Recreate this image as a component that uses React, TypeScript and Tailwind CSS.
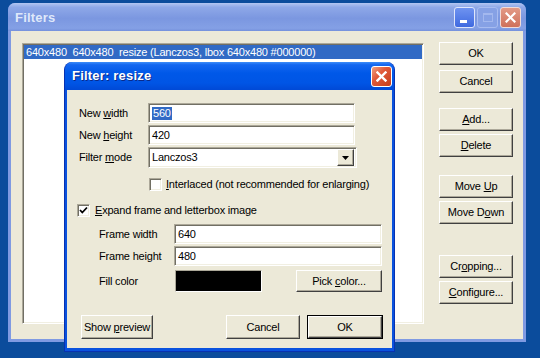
import React from "react";

function U({ children }: { children: React.ReactNode }) {
  return <span className="underline underline-offset-[1px] decoration-[1px]">{children}</span>;
}

const raised =
  "bg-[#ece9d8] border border-t-white border-l-white border-r-[#404040] border-b-[#404040] shadow-[inset_-1px_-1px_0_#aca899]";
const sunken =
  "bg-white border border-t-[#aca899] border-l-[#aca899] border-r-white border-b-white shadow-[inset_1px_1px_0_#716f64,inset_-1px_-1px_0_#f1efe2]";

function Btn({ children, className = "" }: { children: React.ReactNode; className?: string }) {
  return (
    <div className={`${raised} flex items-center justify-center text-[11px] text-black leading-none ${className}`}>
      <span className="whitespace-pre">{children}</span>
    </div>
  );
}

function XIcon({ size = 11, width = 2.2 }: { size?: number; width?: number }) {
  return (
    <svg width={size} height={size} viewBox="0 0 11 11">
      <line x1="1.5" y1="1.5" x2="9.5" y2="9.5" stroke="white" strokeWidth={width} strokeLinecap="square" />
      <line x1="9.5" y1="1.5" x2="1.5" y2="9.5" stroke="white" strokeWidth={width} strokeLinecap="square" />
    </svg>
  );
}

function Check({ checked }: { checked?: boolean }) {
  return (
    <div className={`${sunken} w-[13px] h-[13px] flex items-center justify-center shrink-0`}>
      {checked && (
        <svg width="9" height="9" viewBox="0 0 9 9">
          <polyline points="1,4 3.3,6.5 8,1.5" fill="none" stroke="black" strokeWidth="1.8" />
        </svg>
      )}
    </div>
  );
}

function Field({ children, className = "" }: { children: React.ReactNode; className?: string }) {
  return (
    <div className={`${sunken} h-[20px] flex items-center pl-[3px] text-[11px] text-black ${className}`}>{children}</div>
  );
}

export default function App() {
  return (
    <div className="w-[540px] h-[358px] bg-[#0b4c9c] relative overflow-hidden pl-[8px] pt-[3px] font-['Liberation_Sans',Arial,sans-serif] text-[11px] text-black tracking-[-0.2px]">
      {/* Outer window: Filters (inactive) */}
      <div className="w-[518px] h-[339px] rounded-t-[7px] bg-[#7f9ae2] flex flex-col">
        <div className="h-[28px] rounded-t-[7px] bg-[linear-gradient(to_bottom,#b3c6f2_0%,#8ea8e8_15%,#7b97e0_55%,#84a0e5_90%,#7591dc_100%)] flex items-center pl-[7px] pr-[5px] pt-[2px]">
          <span className="text-[13px] font-bold text-[#dfe8fa] tracking-[0.2px]">Filters</span>
          <div className="ml-auto flex gap-[2px] -mt-[2px]">
            <div className="w-[21px] h-[21px] rounded-[3px] border border-[#dfe6fb] bg-[linear-gradient(to_bottom,#6f93f0,#3f6ae0)] relative">
              <div className="absolute left-[5px] top-[12px] w-[7px] h-[3px] bg-white" />
            </div>
            <div className="w-[21px] h-[21px] rounded-[3px] border border-[#a8bcf0] bg-[#86a1e5] flex items-center justify-center">
              <div className="w-[10px] h-[9px] border border-[#a3b8ee] border-t-2" />
            </div>
            <div className="w-[21px] h-[21px] rounded-[3px] border border-[#f1dcd8] bg-[linear-gradient(to_bottom,#e39a86,#cf715b)] flex items-center justify-center">
              <XIcon size={11} width={2.2} />
            </div>
          </div>
        </div>
        <div className="flex-1 mx-[3px] mb-[3px] bg-[#ece9d8] flex pl-[11px] pt-[12px]">
          <div className="w-[402px] h-[281px] bg-white border border-t-[#aca899] border-l-[#aca899] border-r-white border-b-white shadow-[inset_1px_1px_0_#716f64,inset_-1px_-1px_0_#f1efe2] p-[1px]">
            <div className="h-[14px] bg-[#316ac5] text-white whitespace-pre flex items-center pl-[2px] leading-none">
              {"640x480  640x480  resize (Lanczos3, lbox 640x480 #000000)"}
            </div>
          </div>
          <div className="ml-[15px] w-[74px] flex flex-col">
            <Btn className="mt-[-1px] h-[23px]">OK</Btn>
            <Btn className="mt-[5px] h-[23px]">Cancel</Btn>
            <Btn className="mt-[15px] h-[23px]">
              <U>A</U>dd...
            </Btn>
            <Btn className="mt-[3px] h-[23px]">
              <U>D</U>elete
            </Btn>
            <Btn className="mt-[18px] h-[23px]">
              Move <U>U</U>p
            </Btn>
            <Btn className="mt-[3px] h-[23px]">
              Move D<U>o</U>wn
            </Btn>
            <Btn className="mt-[31px] h-[23px]">
              Cr<U>o</U>pping...
            </Btn>
            <Btn className="mt-[3px] h-[23px]">
              <U>C</U>onfigure...
            </Btn>
          </div>
        </div>
      </div>

      {/* Inner dialog: Filter: resize (active) */}
      <div className="absolute left-[64px] top-[62px] w-[331px] h-[290px] rounded-t-[8px] bg-[#0a52de] border border-[#0831b0] border-t-0 flex flex-col">
        <div className="h-[28px] rounded-t-[8px] bg-[linear-gradient(to_bottom,#3d8df8_0%,#1366f0_10%,#0058e8_40%,#0055e5_75%,#0049d6_100%)] flex items-center pl-[7px] pr-[2px]">
          <span className="text-[13px] font-bold text-white tracking-[0.2px] [text-shadow:1px_1px_0_#0a2a8a]">Filter: resize</span>
          <div className="ml-auto w-[21px] h-[21px] rounded-[3px] border border-white bg-[linear-gradient(135deg,#f0a080_0%,#e0593a_40%,#c63e1a_100%)] flex items-center justify-center">
            <XIcon size={11} width={2.4} />
          </div>
        </div>
        <div className="flex-1 mx-[2px] mb-[3px] bg-[#ece9d8] flex flex-col pl-[12px]">
          <div className="mt-[13px] flex items-center h-[20px]">
            <div className="w-[69px]">
              New <U>w</U>idth
            </div>
            <Field className="w-[207px]">
              <span className="bg-[#316ac5] text-white px-[1px] leading-[13px]">560</span>
            </Field>
          </div>
          <div className="mt-[2px] flex items-center h-[20px]">
            <div className="w-[69px]">
              New <U>h</U>eight
            </div>
            <Field className="w-[207px]">420</Field>
          </div>
          <div className="mt-[2px] flex items-center h-[21px]">
            <div className="w-[69px]">
              Filter <U>m</U>ode
            </div>
            <div className={`${sunken} w-[209px] h-[21px] flex items-center pl-[3px] pr-[2px]`}>
              <span>Lanczos3</span>
              <div className={`${raised} ml-auto w-[17px] h-[17px] flex items-center justify-center`}>
                <svg width="7" height="4" viewBox="0 0 7 4">
                  <polygon points="0,0 7,0 3.5,4" fill="black" />
                </svg>
              </div>
            </div>
          </div>
          <div className="mt-[10px] pl-[70px] flex items-center gap-[4px] h-[13px]">
            <Check />
            <span>
              <U>I</U>nterlaced (not recommended for enlarging)
            </span>
          </div>
          <div className="mt-[13px] -ml-[2px] flex items-center gap-[5px] h-[13px]">
            <Check checked />
            <span>
              <U>E</U>xpand frame and letterbox image
            </span>
          </div>
          <div className="mt-[7px] flex items-center h-[20px]">
            <div className="w-[95px] pl-[20px]">Frame width</div>
            <Field className="w-[208px]">640</Field>
          </div>
          <div className="mt-[2px] flex items-center h-[20px]">
            <div className="w-[95px] pl-[20px]">Frame height</div>
            <Field className="w-[208px]">480</Field>
          </div>
          <div className="mt-[4px] flex items-center h-[22px]">
            <div className="w-[96px] pl-[20px]">Fill color</div>
            <div className="w-[87px] h-[22px] bg-black border border-t-[#aca899] border-l-[#aca899] border-r-white border-b-white" />
            <Btn className="ml-[34px] w-[86px] h-[22px]">
              Pick <U>c</U>olor...
            </Btn>
          </div>
          <div className="mt-[23px] flex items-center h-[24px]">
            <Btn className="ml-[2px] w-[72px] h-[24px]">
              Show <U>p</U>review
            </Btn>
            <Btn className="ml-[73px] w-[74px] h-[24px]">Cancel</Btn>
            <div className="ml-[7px] w-[76px] h-[24px] border border-black flex">
              <Btn className="flex-1">OK</Btn>
            </div>
          </div>
        </div>
      </div>
    </div>
  );
}
